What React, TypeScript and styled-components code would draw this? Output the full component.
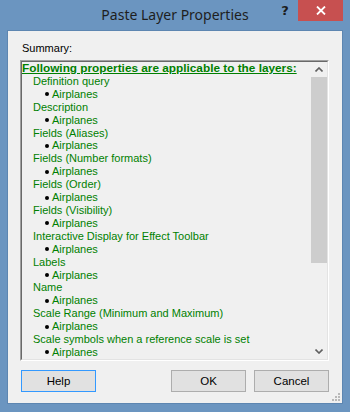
import React from 'react';
import styled, { createGlobalStyle } from 'styled-components';

const GlobalStyle = createGlobalStyle`
  html, body {
    margin: 0;
    padding: 0;
    background: #6b95c0;
  }
`;

const Frame = styled.div`
  width: 350px;
  height: 412px;
  box-sizing: border-box;
  background: #6b95c0;
  display: flex;
  flex-direction: column;
  font-family: "Liberation Sans", Arial, sans-serif;
`;

const TitleBar = styled.div`
  height: 31px;
  display: grid;
  grid-template-columns: 1fr auto 1fr;
  align-items: start;
`;

const Title = styled.div`
  grid-column: 2;
  padding-top: 5px;
  font-family: "Noto Sans", "Open Sans", sans-serif;
  font-size: 14px;
  color: #1e1e1e;
  line-height: 20px;
`;

const Controls = styled.div`
  grid-column: 3;
  justify-self: end;
  display: flex;
  margin-right: 7px;
`;

const HelpGlyph = styled.div`
  width: 26px;
  height: 21px;
  display: flex;
  align-items: center;
  justify-content: center;
  font-family: "DejaVu Sans", sans-serif;
  font-weight: bold;
  font-size: 13px;
  color: #1c1c1c;
`;

const CloseBtn = styled.div`
  width: 45px;
  height: 21px;
  background: #c75050;
  display: flex;
  align-items: center;
  justify-content: center;
`;

const Client = styled.div`
  flex: 1;
  margin: 0 8px 9px 8px;
  background: #f0f0f0;
  padding: 11px 13px 0 12px;
  display: flex;
  flex-direction: column;
  box-shadow: 0 0 0 1px #5d86b1;
  position: relative;
`;

const Label = styled.div`
  font-size: 11px;
  line-height: 13px;
  color: #000;
  padding-left: 2px;
  margin-bottom: 5px;
`;

const ListBox = styled.div`
  height: 301px;
  box-sizing: border-box;
  border-style: solid;
  border-width: 1px;
  border-color: #a0a0a0 #ffffff #ffffff #a0a0a0;
  display: flex;
`;

const ListInner = styled.div`
  flex: 1;
  display: flex;
  border-style: solid;
  border-width: 1px;
  border-color: #696969 #e3e3e3 #e3e3e3 #696969;
  background: #f0f0f0;
  overflow: hidden;
`;

const Lines = styled.div`
  flex: 1;
  font-size: 11px;
  line-height: 12.9px;
  color: #008000;
`;

const Heading = styled.div`
  font-weight: bold;
  text-decoration: underline;
  font-size: 11.8px;
  white-space: nowrap;
`;

const Prop = styled.div`
  padding-left: 11px;
  white-space: nowrap;
`;

const Layer = styled.div`
  padding-left: 23px;
  white-space: nowrap;
  display: flex;
  align-items: center;
`;

const Dot = styled.span`
  width: 4px;
  height: 4px;
  border-radius: 50%;
  background: #000;
  margin-right: 3px;
`;

const ScrollBar = styled.div`
  width: 16px;
  display: flex;
  flex-direction: column;
  background: #f0f0f0;
  margin-left: 1px;
`;

const Arrow = styled.div`
  height: 15px;
  display: flex;
  align-items: center;
  justify-content: center;
`;

const Thumb = styled.div`
  height: 186px;
  background: #cdcdcd;
`;

const Track = styled.div`
  flex: 1;
`;

const ButtonRow = styled.div`
  display: flex;
  margin-top: 9px;
  padding-left: 1px;
`;

const Button = styled.div<{ focused?: boolean }>`
  width: 73px;
  height: 20px;
  border: 1px solid ${(p) => (p.focused ? '#3399ff' : '#adadad')};
  background: #e1e1e1;
  display: flex;
  align-items: center;
  justify-content: center;
  font-size: 11.5px;
  color: #000;
  margin-left: ${(p) => (p.focused ? '0' : '8px')};
`;

const Spacer = styled.div`
  flex: 1;
`;

const Grip = styled.svg`
  position: absolute;
  right: 1px;
  bottom: 1px;
`;

const properties = [
  'Definition query',
  'Description',
  'Fields (Aliases)',
  'Fields (Number formats)',
  'Fields (Order)',
  'Fields (Visibility)',
  'Interactive Display for Effect Toolbar',
  'Labels',
  'Name',
  'Scale Range (Minimum and Maximum)',
  'Scale symbols when a reference scale is set',
];

export default function App() {
  return (
    <>
      <GlobalStyle />
      <Frame>
        <TitleBar>
          <Title>Paste Layer Properties</Title>
          <Controls>
            <HelpGlyph>?</HelpGlyph>
            <CloseBtn>
              <svg width="10" height="9" viewBox="0 0 10 9">
                <path d="M1 0.5 L9 8.5 M9 0.5 L1 8.5" stroke="#fff" strokeWidth="1.8" />
              </svg>
            </CloseBtn>
          </Controls>
        </TitleBar>
        <Client>
          <Label>Summary:</Label>
          <ListBox>
            <ListInner>
              <Lines>
                <Heading>Following properties are applicable to the layers:</Heading>
                {properties.map((p) => (
                  <React.Fragment key={p}>
                    <Prop>{p}</Prop>
                    <Layer>
                      <Dot />
                      Airplanes
                    </Layer>
                  </React.Fragment>
                ))}
              </Lines>
              <ScrollBar>
                <Arrow>
                  <svg width="8" height="5" viewBox="0 0 8 5">
                    <path d="M0.5 4.5 L4 1 L7.5 4.5" stroke="#606060" strokeWidth="1.6" fill="none" />
                  </svg>
                </Arrow>
                <Thumb />
                <Track />
                <Arrow>
                  <svg width="8" height="5" viewBox="0 0 8 5">
                    <path d="M0.5 0.5 L4 4 L7.5 0.5" stroke="#606060" strokeWidth="1.6" fill="none" />
                  </svg>
                </Arrow>
              </ScrollBar>
            </ListInner>
          </ListBox>
          <ButtonRow>
            <Button focused>Help</Button>
            <Spacer />
            <Button>OK</Button>
            <Button>Cancel</Button>
          </ButtonRow>
          <Grip width="10" height="10" viewBox="0 0 10 10">
            {[
              [7, 1], [4, 4], [7, 4], [1, 7], [4, 7], [7, 7],
            ].map(([x, y]) => (
              <rect key={`${x}-${y}`} x={x} y={y} width="2" height="2" fill="#b8b8b8" />
            ))}
          </Grip>
        </Client>
      </Frame>
    </>
  );
}
